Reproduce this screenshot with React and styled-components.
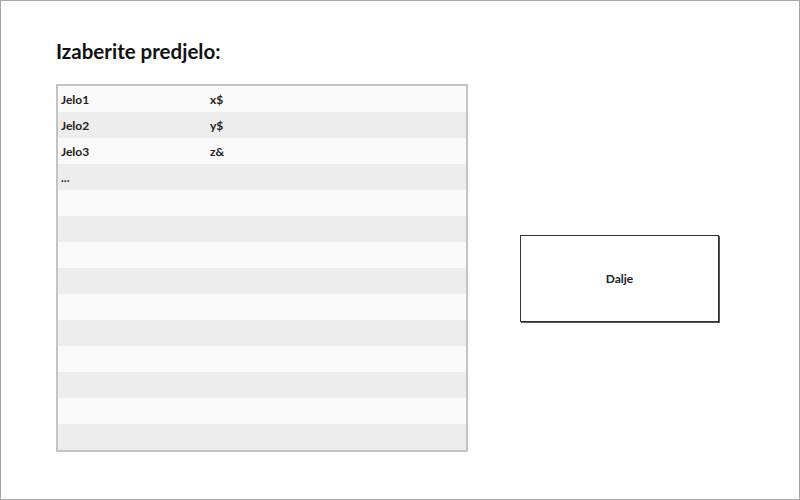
import styled, { createGlobalStyle } from "styled-components";

const GlobalStyle = createGlobalStyle`
  body {
    margin: 0;
    background: #fff;
    font-family: "Lato", "Open Sans", sans-serif;
    color: #222;
  }
`;

const Frame = styled.div`
  box-sizing: border-box;
  width: 800px;
  height: 500px;
  border: 1px solid #a6a6a6;
  padding: 37px 0 0 55px;
  display: flex;
  flex-direction: column;
`;

const Title = styled.h1`
  margin: 0;
  font-size: 20.5px;
  line-height: 26px;
  font-weight: 700;
  color: #111;
`;

const Content = styled.div`
  display: flex;
  align-items: flex-start;
  gap: 52px;
  margin-top: 20px;
`;

const Table = styled.div`
  box-sizing: border-box;
  width: 412px;
  border: 2px solid #c4c4c4;
  display: flex;
  flex-direction: column;
`;

const Row = styled.div`
  display: flex;
  align-items: center;
  height: 26px;
  padding-left: 3px;
  background: ${(p) => (p.$odd ? "#ededed" : "#fafafa")};
  font-size: 12px;
  font-weight: 700;
  color: #222;
`;

const Cell = styled.span`
  width: ${(p) => p.$w || "auto"};
`;

const Button = styled.button`
  box-sizing: border-box;
  margin-top: 151px;
  width: 199px;
  height: 87px;
  background: #fff;
  border: 1px solid #333;
  box-shadow: 1px 1px 0 #555;
  font-family: inherit;
  font-size: 12px;
  font-weight: 700;
  color: #222;
  cursor: pointer;
`;

const dishes = [
  ["Jelo1", "x$"],
  ["Jelo2", "y$"],
  ["Jelo3", "z&"],
  ["...", ""],
];

export default function App() {
  const rows = Array.from({ length: 14 }, (_, i) => dishes[i] || ["", ""]);
  return (
    <>
      <GlobalStyle />
      <Frame>
        <Title>Izaberite predjelo:</Title>
        <Content>
          <Table>
            {rows.map(([name, price], i) => (
              <Row key={i} $odd={i % 2 === 1}>
                <Cell $w="149px">{name}</Cell>
                <Cell>{price}</Cell>
              </Row>
            ))}
          </Table>
          <Button>Dalje</Button>
        </Content>
      </Frame>
    </>
  );
}
